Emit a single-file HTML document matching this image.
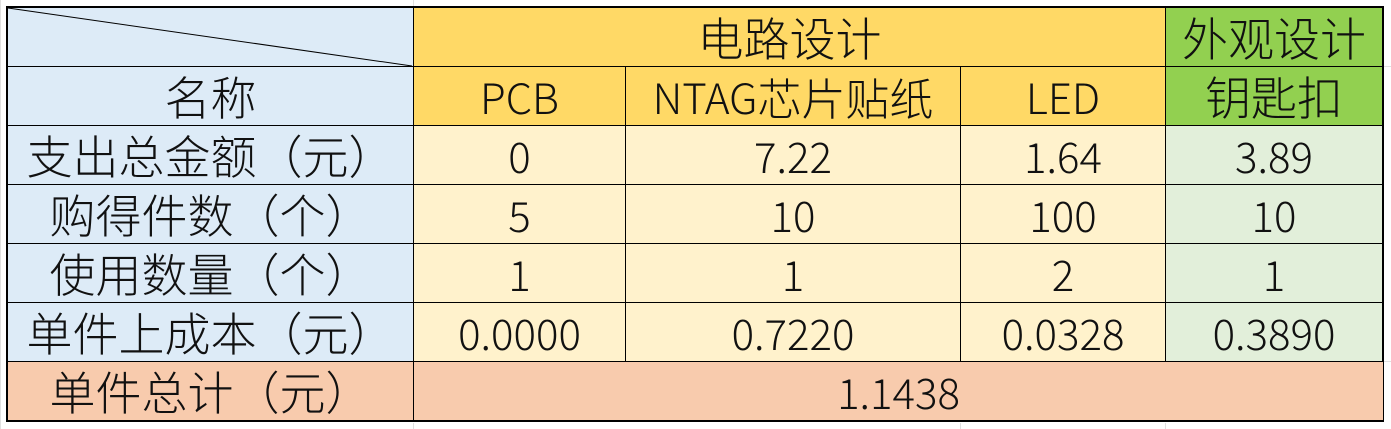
<!DOCTYPE html>
<html><head><meta charset="utf-8"><style>
body{margin:0;width:1391px;height:429px;background:#fff;position:relative;overflow:hidden;font-family:"Noto Sans CJK SC",sans-serif;}
.c{position:absolute;box-sizing:border-box;display:flex;align-items:center;justify-content:center;font-size:42px;font-weight:300;color:#111;border-right:1.5px solid #000;border-bottom:1.5px solid #000;}
.k{font-size:46px;}
.k2{font-size:44px;}
.b{background:#DDEBF7}.y{background:#FFD966}.ly{background:#FFF2CC}.g{background:#92D050}.lg{background:#E2EFDA}.o{background:#F8CBAD}
.gl{position:absolute;background:#e0e0e0}
</style></head><body>
<div class="gl" style="left:0;top:0;width:1px;height:429px"></div>
<div class="gl" style="left:413px;top:0;width:1px;height:6px"></div>
<div class="gl" style="left:413px;top:423px;width:1px;height:6px"></div>
<div class="gl" style="left:1165px;top:423px;width:1px;height:6px"></div>
<div class="gl" style="left:960px;top:423px;width:1px;height:6px"></div>
<div class="gl" style="left:1384px;top:66px;width:7px;height:1px"></div>
<div class="gl" style="left:1384px;top:361px;width:7px;height:1px"></div>
<div style="position:absolute;left:6px;top:6px;width:1378px;height:416px;border:2.5px solid #000;box-sizing:border-box;"></div>
<div class="c b" style="left:8px;top:8px;width:406px;height:59px"></div>
<svg style="position:absolute;left:0;top:0" width="420" height="70"><line x1="8" y1="8" x2="412" y2="66" stroke="#000" stroke-width="1"/></svg>
<div class="c y k" style="left:414px;top:8px;width:752px;height:59px">电路设计</div>
<div class="c g k" style="left:1166px;top:8px;width:217px;height:59px">外观设计</div>
<div class="c b k" style="left:8px;top:67px;width:406px;height:59px">名称</div>
<div class="c y" style="left:414px;top:67px;width:212px;height:59px">PCB</div>
<div class="c y" style="left:626px;top:67px;width:335px;height:59px">NTAG<span class="k2">芯片贴纸</span></div>
<div class="c y" style="left:961px;top:67px;width:205px;height:59px">LED</div>
<div class="c g k" style="left:1166px;top:67px;width:217px;height:59px">钥匙扣</div>

<div class="c b k" style="left:8px;top:126px;width:406px;height:59px">支出总金额（元）</div>
<div class="c ly" style="left:414px;top:126px;width:212px;height:59px">0</div>
<div class="c ly" style="left:626px;top:126px;width:335px;height:59px">7.22</div>
<div class="c ly" style="left:961px;top:126px;width:205px;height:59px">1.64</div>
<div class="c lg" style="left:1166px;top:126px;width:217px;height:59px">3.89</div>

<div class="c b k" style="left:8px;top:185px;width:406px;height:59px">购得件数（个）</div>
<div class="c ly" style="left:414px;top:185px;width:212px;height:59px">5</div>
<div class="c ly" style="left:626px;top:185px;width:335px;height:59px">10</div>
<div class="c ly" style="left:961px;top:185px;width:205px;height:59px">100</div>
<div class="c lg" style="left:1166px;top:185px;width:217px;height:59px">10</div>

<div class="c b k" style="left:8px;top:244px;width:406px;height:59px">使用数量（个）</div>
<div class="c ly" style="left:414px;top:244px;width:212px;height:59px">1</div>
<div class="c ly" style="left:626px;top:244px;width:335px;height:59px">1</div>
<div class="c ly" style="left:961px;top:244px;width:205px;height:59px">2</div>
<div class="c lg" style="left:1166px;top:244px;width:217px;height:59px">1</div>

<div class="c b k" style="left:8px;top:303px;width:406px;height:59px">单件上成本（元）</div>
<div class="c ly" style="left:414px;top:303px;width:212px;height:59px">0.0000</div>
<div class="c ly" style="left:626px;top:303px;width:335px;height:59px">0.7220</div>
<div class="c ly" style="left:961px;top:303px;width:205px;height:59px">0.0328</div>
<div class="c lg" style="left:1166px;top:303px;width:217px;height:59px">0.3890</div>

<div class="c o k" style="left:8px;top:362px;width:406px;height:58px;border-bottom:none">单件总计（元）</div>
<div class="c o" style="left:414px;top:362px;width:969px;height:58px;border-right:none;border-bottom:none">1.1438</div>
</body></html>
